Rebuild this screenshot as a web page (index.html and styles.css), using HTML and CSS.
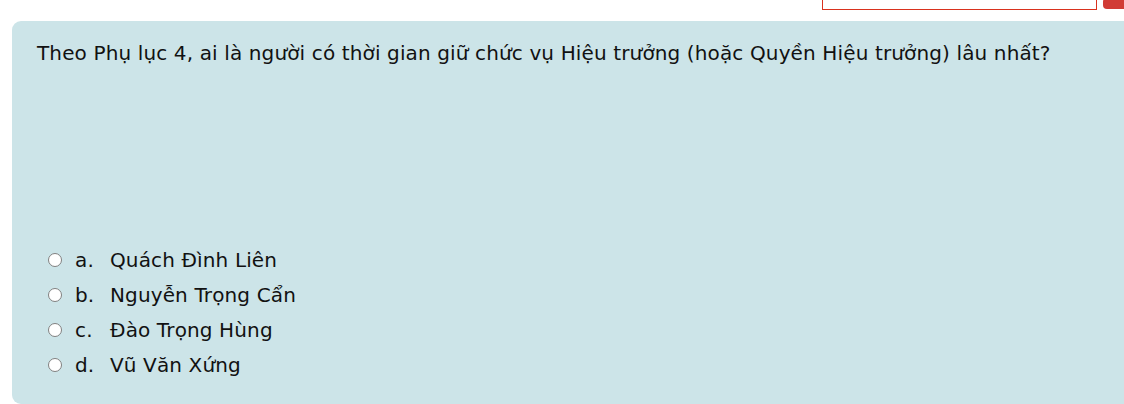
FILE: index.html
```html
<!DOCTYPE html>
<html lang="vi">
<head>
<meta charset="utf-8">
<link rel="stylesheet" href="styles.css">
</head>
<body>
<div class="topbar">
  <div class="searchbox"></div>
  <div class="redbtn"></div>
</div>
<div class="card">
  <div class="question">Theo Phụ lục 4, ai là người có thời gian giữ chức vụ Hiệu trưởng (hoặc Quyền Hiệu trưởng) lâu nhất?</div>
  <div class="answers">
    <label class="answer"><input type="radio" name="q"><span class="letter">a.</span><span class="name">Quách Đình Liên</span></label>
    <label class="answer"><input type="radio" name="q"><span class="letter">b.</span><span class="name">Nguyễn Trọng Cẩn</span></label>
    <label class="answer"><input type="radio" name="q"><span class="letter">c.</span><span class="name">Đào Trọng Hùng</span></label>
    <label class="answer"><input type="radio" name="q"><span class="letter">d.</span><span class="name">Vũ Văn Xứng</span></label>
  </div>
</div>
</body>
</html>
```

FILE: styles.css
```css
html, body {
  margin: 0;
  padding: 0;
  background: #ffffff;
  font-family: "DejaVu Sans", Verdana, sans-serif;
  color: #111111;
  overflow: hidden;
}

.topbar {
  height: 21px;
  display: flex;
  align-items: flex-start;
  padding-left: 822px;
}

.searchbox {
  flex-shrink: 0;
  width: 275px;
  height: 12px;
  margin-top: -2px;
  border: 1px solid #d9321e;
  background: #ffffff;
  box-sizing: border-box;
}

.redbtn {
  flex-shrink: 0;
  width: 40px;
  height: 11px;
  margin-left: 6px;
  margin-top: -2px;
  background: #d13b35;
  border-radius: 4px;
}

.card {
  margin-left: 12px;
  margin-right: -20px;
  height: 383px;
  background: #cce4e8;
  border-radius: 9px;
  padding: 19px 25px 0 25px;
  box-sizing: border-box;
  letter-spacing: 0.13px;
}

.question {
  font-size: 20px;
  line-height: 26px;
  height: 202px;
}

.answers {
  display: flex;
  flex-direction: column;
}

.answer {
  display: flex;
  align-items: center;
  height: 35px;
  font-size: 20px;
}

.answer input {
  appearance: none;
  -webkit-appearance: none;
  margin: 0 0 0 11px;
  width: 14px;
  height: 14px;
  border: 1.5px solid #808080;
  border-radius: 50%;
  background: #ffffff;
  box-sizing: border-box;
  flex-shrink: 0;
}

.letter {
  margin-left: 13px;
  width: 35px;
}
```
